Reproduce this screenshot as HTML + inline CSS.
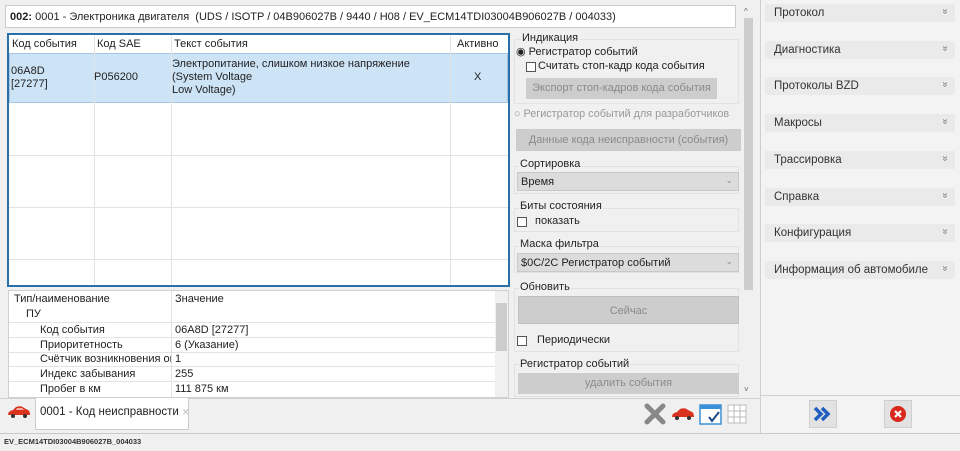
<!DOCTYPE html>
<html><head><meta charset="utf-8"><style>
*{box-sizing:border-box;margin:0;padding:0}
body{width:960px;height:451px;background:#f0f0f0;font-family:"Liberation Sans",sans-serif;font-size:11px;color:#222;position:relative;overflow:hidden}
.a{position:absolute;white-space:nowrap}
.line{position:absolute;background:#d6d6d6}
.btn{position:absolute;background:#cdcdcd;color:#8a8a8a;text-align:center}
.grp{position:absolute;border:1px solid #e2e2e2;background:#f0f0f0}
.cb{position:absolute;width:10px;height:10px;border:1px solid #555;background:#fff}
.sel{position:absolute;background:#dcdcdc;border:1px solid #c8c8c8}
.ri{position:absolute;left:765px;width:190px;height:18px;background:#eaeaea;font-size:11.5px;padding:3px 0 0 9px;color:#333}
.ri span{position:absolute;right:7px;top:2px;font-size:10px;color:#777;transform:rotate(90deg)}
</style></head><body>
<!-- header -->
<div class="a" style="left:5px;top:5px;width:731px;height:23px;background:#fff;border:1px solid #ccc;padding:5px 0 0 4px">
<b>002:</b> 0001 - Электроника двигателя &nbsp;(UDS / ISOTP / 04B906027B / 9440 / H08 / EV_ECM14TDI03004B906027B / 004033)</div>
<!-- main table -->
<div class="a" style="left:7px;top:33px;width:503px;height:254px;background:#fff;border:2px solid #2a6fa8"></div>
<div class="a" style="left:9px;top:53px;width:499px;height:50px;background:#cde3f6;border:1px solid #a4c6e4"></div>
<div class="line" style="left:94px;top:35px;width:1px;height:250px;background:#e3e3e3"></div>
<div class="line" style="left:171px;top:35px;width:1px;height:250px;background:#e3e3e3"></div>
<div class="line" style="left:450px;top:35px;width:1px;height:250px;background:#e3e3e3"></div>
<div class="line" style="left:9px;top:155px;width:499px;height:1px;background:#e3e3e3"></div>
<div class="line" style="left:9px;top:207px;width:499px;height:1px;background:#e3e3e3"></div>
<div class="line" style="left:9px;top:259px;width:499px;height:1px;background:#e3e3e3"></div>
<div class="a" style="left:12px;top:38px">Код события</div>
<div class="a" style="left:97px;top:38px">Код SAE</div>
<div class="a" style="left:174px;top:38px">Текст события</div>
<div class="a" style="left:457px;top:38px">Активно</div>
<div class="a" style="left:11px;top:65px;line-height:13px">06A8D<br>[27277]</div>
<div class="a" style="left:94px;top:71px">P056200</div>
<div class="a" style="left:172px;top:58px;line-height:13px">Электропитание, слишком низкое напряжение<br>(System Voltage<br>Low Voltage)</div>
<div class="a" style="left:474px;top:71px">X</div>
<!-- lower table -->
<div class="a" style="left:8px;top:290px;width:501px;height:108px;background:#fff;border:1px solid #d0d0d0"></div>
<div class="a" style="left:495px;top:291px;width:13px;height:106px;background:#f0f0f0"></div>
<div class="a" style="left:496px;top:303px;width:11px;height:48px;background:#cdcdcd"></div>
<div class="line" style="left:171px;top:291px;width:1px;height:106px;background:#e3e3e3"></div>
<div class="line" style="left:9px;top:322px;width:486px;height:1px;background:#e3e3e3"></div>
<div class="line" style="left:9px;top:337px;width:486px;height:1px;background:#e3e3e3"></div>
<div class="line" style="left:9px;top:352px;width:486px;height:1px;background:#e3e3e3"></div>
<div class="line" style="left:9px;top:366px;width:486px;height:1px;background:#e3e3e3"></div>
<div class="line" style="left:9px;top:381px;width:486px;height:1px;background:#e3e3e3"></div>
<div class="a" style="left:14px;top:293px">Тип/наименование</div>
<div class="a" style="left:175px;top:293px">Значение</div>
<div class="a" style="left:26px;top:308px">ПУ</div>
<div class="a" style="left:40px;top:324px">Код события</div><div class="a" style="left:175px;top:324px">06A8D [27277]</div>
<div class="a" style="left:40px;top:339px">Приоритетность</div><div class="a" style="left:175px;top:339px">6 (Указание)</div>
<div class="a" style="left:40px;top:353px;width:131px;overflow:hidden">Счётчик возникновения ош</div><div class="a" style="left:175px;top:353px">1</div>
<div class="a" style="left:40px;top:368px">Индекс забывания</div><div class="a" style="left:175px;top:368px">255</div>
<div class="a" style="left:40px;top:383px">Пробег в км</div><div class="a" style="left:175px;top:383px">111 875 км</div>
<!-- tab bar -->
<div class="line" style="left:0;top:398px;width:760px;height:1px;background:#d0d0d0"></div>
<div class="a" style="left:35px;top:398px;width:154px;height:32px;background:#fff;border:1px solid #ccc;border-top:none;padding:8px 0 0 4px;font-size:11.5px">0001 - Код неисправности <span style="color:#bbb;font-size:9px">✕</span></div>
<svg class="a" style="left:7px;top:405px" width="24" height="14" viewBox="0 0 24 14"><path d="M1 10 Q1 6 6 5 L9 2 Q14 0 17 3 L21 5 Q23 6 23 10 Z" fill="#d9331f"/><circle cx="6" cy="11" r="2" fill="#333"/><circle cx="18" cy="11" r="2" fill="#333"/><path d="M10 3 L15 3 L17 5 L9 5Z" fill="#f7b0a0"/></svg>
<div class="line" style="left:0;top:433px;width:960px;height:1px;background:#c8c8c8"></div>
<div class="a" style="left:4px;top:437px;font-size:7.5px;font-weight:bold;color:#333">EV_ECM14TDI03004B906027B_004033</div>
<!-- toolbar icons -->
<svg class="a" style="left:644px;top:403px" width="22" height="22" viewBox="0 0 22 22"><path d="M3 3 L19 19 M19 3 L3 19" stroke="#888" stroke-width="5" stroke-linecap="round"/></svg>
<svg class="a" style="left:671px;top:407px" width="24" height="14" viewBox="0 0 24 14"><path d="M1 10 Q1 6 6 5 L9 2 Q14 0 17 3 L21 5 Q23 6 23 10 Z" fill="#d9331f"/><circle cx="6" cy="11" r="2" fill="#333"/><circle cx="18" cy="11" r="2" fill="#333"/></svg>
<svg class="a" style="left:699px;top:404px" width="24" height="22" viewBox="0 0 24 22"><rect x="1" y="1" width="21" height="19" fill="#fff" stroke="#3a8fd6" stroke-width="1.5"/><rect x="1" y="1" width="21" height="4" fill="#3a8fd6"/><path d="M10 13 L13 17 L20 8" stroke="#1a4a8a" stroke-width="2" fill="none"/></svg>
<svg class="a" style="left:727px;top:404px" width="22" height="22" viewBox="0 0 22 22"><g stroke="#bbb" fill="#fff"><rect x="1" y="1" width="18" height="18"/><path d="M7 1V19M13 1V19M1 7H19M1 13H19"/></g></svg>
<!-- middle panel -->
<div class="a" style="left:742px;top:5px;width:12px;height:392px;background:#f0f0f0"></div>
<div class="a" style="left:744px;top:18px;width:9px;height:272px;background:#cdcdcd"></div>
<div class="a" style="left:744px;top:7px;font-size:8px;color:#666">^</div>
<div class="a" style="left:744px;top:385px;font-size:8px;color:#666">˅</div>
<div class="grp" style="left:514px;top:39px;width:225px;height:65px"></div>
<div class="a" style="left:520px;top:32px;background:#f0f0f0;padding:0 2px">Индикация</div>
<div class="a" style="left:516px;top:45px">◉ Регистратор событий</div>
<div class="cb" style="left:526px;top:62px"></div><div class="a" style="left:538px;top:60px">Считать стоп-кадр кода события</div>
<div class="btn" style="left:526px;top:78px;width:191px;height:21px;padding-top:4px">Экспорт стоп-кадров кода события</div>
<div class="a" style="left:514px;top:108px;color:#999;font-size:10.8px">○ Регистратор событий для разработчиков</div>
<div class="btn" style="left:516px;top:129px;width:225px;height:22px;padding-top:5px">Данные кода неисправности (события)</div>
<div class="grp" style="left:514px;top:166px;width:225px;height:28px"></div>
<div class="a" style="left:519px;top:158px;background:#f0f0f0;padding:0 1px">Сортировка</div>
<div class="sel" style="left:517px;top:172px;width:222px;height:19px;padding:3px 0 0 3px">Время<span style="position:absolute;right:5px;top:2px;color:#888;font-size:9px">⌄</span></div>
<div class="grp" style="left:514px;top:208px;width:225px;height:24px"></div>
<div class="a" style="left:519px;top:200px;background:#f0f0f0;padding:0 1px">Биты состояния</div>
<div class="cb" style="left:517px;top:217px"></div><div class="a" style="left:535px;top:215px">показать</div>
<div class="grp" style="left:514px;top:246px;width:225px;height:27px"></div>
<div class="a" style="left:519px;top:238px;background:#f0f0f0;padding:0 1px">Маска фильтра</div>
<div class="sel" style="left:517px;top:253px;width:222px;height:19px;padding:3px 0 0 3px">$0C/2C Регистратор событий<span style="position:absolute;right:5px;top:2px;color:#888;font-size:9px">⌄</span></div>
<div class="grp" style="left:514px;top:288px;width:225px;height:64px"></div>
<div class="a" style="left:519px;top:281px;background:#f0f0f0;padding:0 1px">Обновить</div>
<div class="btn" style="left:518px;top:296px;width:221px;height:28px;padding-top:8px;border:1px solid #c0c0c0">Сейчас</div>
<div class="cb" style="left:517px;top:336px"></div><div class="a" style="left:537px;top:334px">Периодически</div>
<div class="grp" style="left:514px;top:364px;width:225px;height:33px"></div>
<div class="a" style="left:519px;top:358px;background:#f0f0f0;padding:0 1px">Регистратор событий</div>
<div class="btn" style="left:518px;top:373px;width:221px;height:21px;padding-top:4px">удалить события</div>
<!-- right panel -->
<div class="a" style="left:760px;top:0;width:200px;height:433px;background:#f3f3f3;border-left:1px solid #cfcfcf"></div>
<div class="line" style="left:760px;top:395px;width:200px;height:1px;background:#cfcfcf"></div>
<div class="ri" style="top:4px">Протокол<span>»</span></div>
<div class="ri" style="top:41px">Диагностика<span>»</span></div>
<div class="ri" style="top:77px">Протоколы BZD<span>»</span></div>
<div class="ri" style="top:114px">Макросы<span>»</span></div>
<div class="ri" style="top:151px">Трассировка<span>»</span></div>
<div class="ri" style="top:188px">Справка<span>»</span></div>
<div class="ri" style="top:224px">Конфигурация<span>»</span></div>
<div class="ri" style="top:261px">Информация об автомобиле<span>»</span></div>
<div class="a" style="left:809px;top:400px;width:28px;height:28px;background:#e2e2e2;border:1px solid #cfcfcf"></div>
<svg class="a" style="left:813px;top:406px" width="20" height="16" viewBox="0 0 20 16"><path d="M2 2 L8 8 L2 14 M9 2 L15 8 L9 14" stroke="#1f5fc0" stroke-width="3.5" fill="none"/></svg>
<div class="a" style="left:884px;top:400px;width:28px;height:28px;background:#e2e2e2;border:1px solid #cfcfcf"></div>
<svg class="a" style="left:889px;top:405px" width="18" height="18" viewBox="0 0 18 18"><circle cx="9" cy="9" r="8" fill="#d9281c"/><path d="M6 6 L12 12 M12 6 L6 12" stroke="#fff" stroke-width="2.2"/></svg>
</body></html>
